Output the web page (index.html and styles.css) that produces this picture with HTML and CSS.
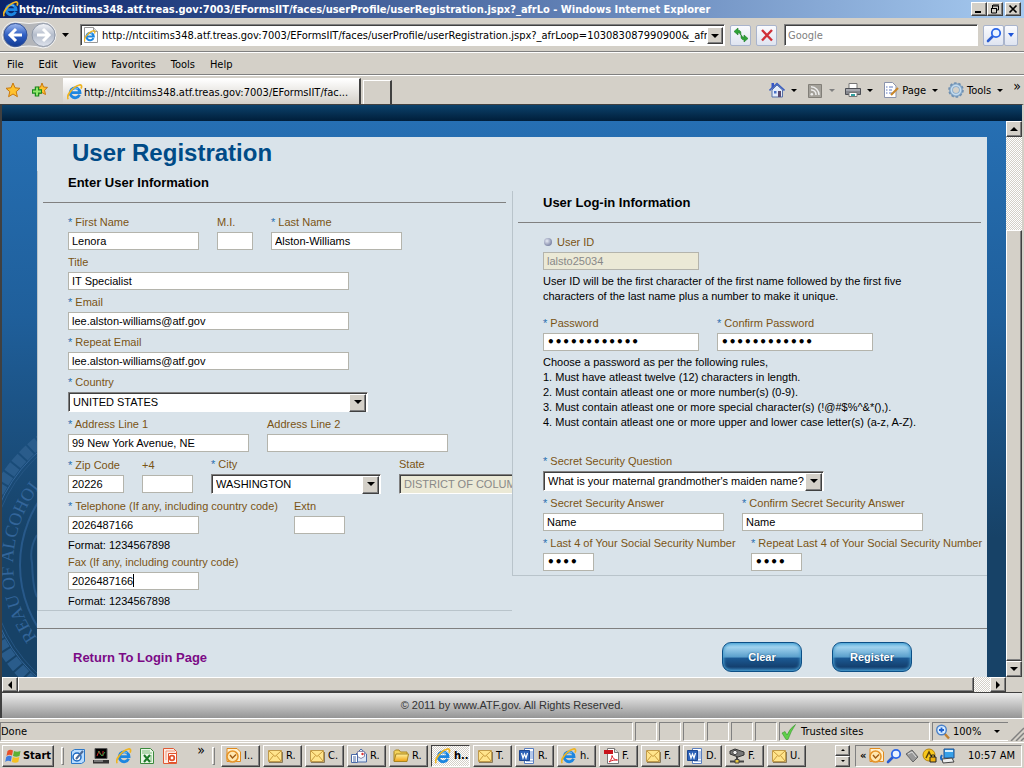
FILE: index.html
```html
<!DOCTYPE html>
<html lang="en">
  <head>
    <title>User Registration</title>
    <meta charset="UTF-8" />
    <meta name="viewport" content="width=device-width" />
    <link rel="stylesheet" href="styles.css">
  </head>
  <body>
    <!-- Shared icons -->
    <svg class="sprite" aria-hidden="true">
      <defs>
        <linearGradient id="blue-ball" x1="0" y1="0" x2="0" y2="1">
          <stop offset="0" stop-color="#9fb9ee" />
          <stop offset=".5" stop-color="#2f5fc4" />
          <stop offset="1" stop-color="#123a92" />
        </linearGradient>
        <linearGradient id="grey-ball" x1="0" y1="0" x2="0" y2="1">
          <stop offset="0" stop-color="#f4f6fa" />
          <stop offset=".5" stop-color="#b4bccb" />
          <stop offset="1" stop-color="#dfe4ee" />
        </linearGradient>
        <linearGradient id="gold" x1="0" y1="0" x2="0" y2="1">
          <stop offset="0" stop-color="#fff3a0" />
          <stop offset="1" stop-color="#f0a010" />
        </linearGradient>
        <symbol id="ie" viewBox="0 0 16 16">
          <path d="M12.6 10.8A4.9 4.9 0 1 1 13 8.6H4.6" fill="none" stroke="#1d86e0" stroke-width="2.8" />
          <path d="M4.2 6.4A4.6 4.6 0 0 1 11 5" fill="none" stroke="#7cc4f8" stroke-width="1" />
          <path d="M1.4 15C-1.6 12.6 5.6 3 11.6 1.2c3-1 3.6.8 2.4 3.4" fill="none" stroke="#eeb422" stroke-width="1.7" />
        </symbol>
        <symbol id="mail" viewBox="0 0 16 16">
          <path d="M1.5 2.500h13v11h-13z" fill="#ffe48c" stroke="#c09a4a" />
          <path d="M2 3l6 5.500L14 3M2 13l4.500-5.500M14 13L9.500 7.500" fill="none" stroke="#c89a3c" />
          <path d="M2 14.500h13.500V4" fill="none" stroke="#8a7a5a" />
        </symbol>
        <symbol id="clock" viewBox="0 0 16 16">
          <path d="M2 .5h10l3.500 3.500v9.500H2z" fill="#fff1d0" stroke="#e08a1e" />
          <circle cx="7.500" cy="8.500" r="5.500" fill="#ffe7b0" stroke="#e6952a" stroke-width="1.600" />
          <path d="M5 7l2.500 3L11 6.500" fill="none" stroke="#a05a10" stroke-width="1.400" />
        </symbol>
        <symbol id="folder" viewBox="0 0 16 16">
          <path d="M1 13V3.500L2.500 2H6l1.500 2H14v2" fill="#f3d35c" stroke="#a88420" />
          <path d="M1 13.500L3 6h12.500L14 13.500z" fill="url(#gold)" stroke="#a88420" />
        </symbol>
        <symbol id="word" viewBox="0 0 16 16">
          <path d="M5.500.5h9v15h-9z" fill="#fff" stroke="#5b7fc0" />
          <path d="M11 4h3M11 6h3M11 8h3M11 10h3M7 13h7" stroke="#6d92d4" />
          <path d="M.5 2.500h10v10H.5z" fill="#2d62b8" stroke="#1d4690" />
          <path d="M2.500 5l1.500 5 1.500-4L7 10l1.500-5" fill="none" stroke="#fff" stroke-width="1.200" />
        </symbol>
        <symbol id="pdf" viewBox="0 0 16 16">
          <path d="M4.500.5h7l4 4v11h-11z" fill="#fff" stroke="#777" />
          <path d="M11.500.5v4h4" fill="#ddd" stroke="#777" />
          <path d="M1 2h9v4H1z" fill="#c8141c" />
          <path d="M6 14c2-2 3-4 3-6.500 1 3 2.500 4.500 5.500 4.500-3 0-5.500 0-8.500 2z" fill="none" stroke="#d8202a" />
        </symbol>
        <symbol id="open-mail" viewBox="0 0 16 16">
          <path d="M5 6l5-5 5.500 5v8H5z" fill="#dce8f8" stroke="#4a6aa8" />
          <path d="M6.500 3.500h7v5l-3.500 2-3.500-2z" fill="#fff" stroke="#88a" />
          <circle cx="11.500" cy="6" r="1.200" fill="#d33" />
          <path d="M.5 6.500h6v8h-6z" fill="#fff" stroke="#4a6aa8" />
          <path d="M2 9h3M2 11h3M2 13h3" stroke="#4a6aa8" />
        </symbol>
        <symbol id="network" viewBox="0 0 16 16">
          <path d="M1 3l5-2 9 3v3L9 9 1 6z" fill="#777" stroke="#333" />
          <circle cx="6" cy="4.500" r="2.200" fill="#eee" stroke="#444" />
          <path d="M8 9v4M1 13.500h14" stroke="#444" stroke-width="2" />
          <path d="M6 11.500h4v3.500H6z" fill="#e8c840" stroke="#444" />
        </symbol>
        <symbol id="lens" viewBox="0 0 16 16">
          <path d="M7 9L2 14" stroke="#2a5cd0" stroke-width="2.600" stroke-linecap="round" />
          <circle cx="10" cy="6" r="4.200" fill="#eaf4ff" stroke="#2a66e8" stroke-width="1.800" />
        </symbol>
      </defs>
    </svg>

    <!-- Title bar -->
    <header class="title-bar">
      <svg class="icon"><use href="#ie" /></svg>
      <span class="title-text">http://ntciitims348.atf.treas.gov:7003/EFormsIIT/faces/userProfile/userRegistration.jspx?_afrLo - Windows Internet Explorer</span>
      <button class="win-btn" aria-label="Minimize"><svg viewBox="0 0 12 10"><path d="M2 8h6" stroke="#000" stroke-width="2" /></svg></button>
      <button class="win-btn" aria-label="Restore"><svg viewBox="0 0 12 10"><path d="M4 1h6M4 2h5.500v4H8M3.500 1v3M2 4.500h6M2.500 4v5h5V4" fill="none" stroke="#000" /></svg></button>
      <button class="win-btn close" aria-label="Close"><svg viewBox="0 0 12 10"><path d="M2.500 1.500l7 7M9.500 1.500l-7 7" stroke="#000" stroke-width="1.700" /></svg></button>
    </header>

    <!-- Address bar -->
    <div class="nav-bar">
      <button class="plain" aria-label="Back and forward">
        <svg width="70" height="28" viewBox="0 0 70 28">
          <path d="M14 1q14 3 28 0a13 13 0 0 1 0 26q-14-4-28 0A13 13 0 0 1 14 1z" fill="#b4b6ba" stroke="#f4f4f4" />
          <circle cx="14.500" cy="14" r="11.500" fill="url(#blue-ball)" stroke="#31529a" />
          <circle cx="42.500" cy="14" r="11.500" fill="url(#grey-ball)" stroke="#8f98a8" />
          <path d="M9 14h12M15 8l-6 6 6 6" fill="none" stroke="#fff" stroke-width="3" />
          <path d="M36 14h12M42 8l6 6-6 6" fill="none" stroke="#fff" stroke-width="3" />
          <path d="M61 12h7l-3.500 4z" />
        </svg>
      </button>
      <div class="address">
        <svg class="icon" viewBox="0 0 16 16"><path d="M1.500.5h9l4 4v11h-13z" fill="#fff" stroke="#999" /><path d="M10.500.5v4h4" fill="#ddd" stroke="#999" /><use href="#ie" x="1" y="3" width="12" height="12" /></svg>
        <input type="text" aria-label="Address" value="http://ntciitims348.atf.treas.gov:7003/EFormsIIT/faces/userProfile/userRegistration.jspx?_afrLoop=103083087990900&amp;_afrWindowMode=0">
        <button class="drop" aria-label="Show addresses"></button>
      </div>
      <button class="tool-btn" aria-label="Refresh"><svg class="icon" viewBox="0 0 16 16"><path d="M5 1L1 4.500 5 8V5.800c1.500 0 2.300.8 2.500 2.400C8.600 5 7.500 3.200 5 3.200zM11 8l4 3.500-4 3.500v-2.200c-2.500 0-3.700-1.800-2.600-5 .3 1.600 1.100 2.400 2.600 2.400z" fill="#2fa336" stroke="#1c7a26" stroke-width=".6" /></svg></button>
      <button class="tool-btn" aria-label="Stop"><svg class="icon" viewBox="0 0 16 16"><path d="M3 3l10 10.500M13 3L3 13.500" stroke="#d03038" stroke-width="2.400" /></svg></button>
      <input class="search" type="text" aria-label="Search" placeholder="Google">
      <div class="search-go">
        <button class="tool-btn" aria-label="Search"><svg class="icon"><use href="#lens" /></svg></button>
        <button class="tool-btn narrow" aria-label="Search options"><svg width="6" height="4"><path d="M0 0h6L3 4z" fill="#1f55d8" /></svg></button>
      </div>
    </div>

    <!-- Menus -->
    <nav class="menu-bar">
      <button class="plain">File</button>
      <button class="plain">Edit</button>
      <button class="plain">View</button>
      <button class="plain">Favorites</button>
      <button class="plain">Tools</button>
      <button class="plain">Help</button>
    </nav>

    <!-- Tabs and page tools -->
    <div class="tab-bar">
      <div class="favorites">
        <svg class="icon" viewBox="0 0 16 16"><path d="M8 1l2 4.800 5 .5-3.800 3.400 1.200 5L8 12l-4.400 2.700 1.200-5L1 6.300l5-.5z" fill="#ffc22e" stroke="#c8780e" /></svg>
        <svg class="icon" viewBox="0 0 16 16"><path d="M10 1l1.500 4 4 .4-3 2.800 1 4.300-3.500-2-4 2 1-4.300-3-2.800 4.500-.4z" fill="#ffc22e" stroke="#c8780e" /><path d="M5 4.500v10M0 9.500h10" stroke="#1a8a1e" stroke-width="4.500" /><path d="M5 5.500v8M1 9.500h8" stroke="#8fe86a" stroke-width="2" /></svg>
      </div>
      <button class="tab"><svg class="icon"><use href="#ie" /></svg>http://ntciitims348.atf.treas.gov:7003/EFormsIIT/fac...</button>
      <button class="tab new" aria-label="New tab"></button>
      <div class="page-tools">
        <button class="plain arrow" aria-label="Home"><svg class="icon" viewBox="0 0 16 16"><path d="M3 8v7h10.500V8L8 3z" fill="#e4ecfa" stroke="#5570a8" /><path d="M2.500 1h2.500v4l-2.500 2z" fill="#3656c8" /><path d="M.5 8.500L8 1.500l7.500 7" fill="none" stroke="#3c5fc0" stroke-width="1.600" /><path d="M9 9h3v6H9z" fill="#5b4a70" /><path d="M5 9h2.500v2.500H5z" fill="#4a72c8" /></svg></button>
        <button class="plain arrow dim" aria-label="Feeds"><svg class="icon" viewBox="0 0 16 16"><path d="M1.500 2.500h13v13h-13z" fill="#a4a19a" stroke="#827f78" /><circle cx="4.800" cy="12.200" r="1.300" fill="#eee" /><path d="M4 8a4.500 4.500 0 0 1 5 5M4 4.800A8 8 0 0 1 12 13" fill="none" stroke="#eee" stroke-width="1.500" /></svg></button>
        <button class="plain arrow" aria-label="Print"><svg class="icon" viewBox="0 0 16 16"><path d="M4 1.500h8v5H4z" fill="#fff" stroke="#777" /><path d="M.5 6.500h15v6H.5z" fill="#85878e" stroke="#4d4f55" /><path d="M1 8h14" stroke="#c6c8ce" /><path d="M4 10.500h8v4H4z" fill="#fff" stroke="#777" /><path d="M6 13h4" stroke="#30a0a0" stroke-width="2" /></svg></button>
        <button class="plain arrow"><svg class="icon" viewBox="0 0 16 16"><path d="M1.500.5h8l3.500 3.500v11.500H1.500z" fill="#fff" stroke="#8a93ac" /><path d="M3 5h1.500M6 5h4M3 8h1.500M6 8h3M3 11h1.500M6 11h3" stroke="#5c78c0" /><path d="M8 13l7-7" stroke="#c8862a" stroke-width="2.200" /></svg>Page</button>
        <button class="plain arrow"><svg class="icon" viewBox="0 0 16 16"><circle cx="8" cy="8" r="5" fill="none" stroke="#86a8c8" stroke-width="4" /><circle cx="8" cy="8" r="7" fill="none" stroke="#6f8fb0" stroke-width="1.600" stroke-dasharray="2.500 1.900" /><circle cx="8" cy="8" r="4.600" fill="none" stroke="#c4dbee" stroke-width="1.600" /></svg>Tools</button>
        <button class="plain more" aria-label="More tools">»</button>
      </div>
    </div>

    <div class="viewport">
      <div class="banner"></div>
      <div class="scroll-area">
        <main class="page">
          <svg class="seal" viewBox="2 427 35 250" aria-hidden="true">
            <circle cx="138" cy="565" r="158" fill="none" stroke="#2a5c8b" stroke-width="12" stroke-dasharray="9 2" />
            <circle cx="138" cy="565" r="151" fill="none" stroke="#33669a" />
            <circle cx="138" cy="565" r="148" fill="none" stroke="#265684" />
            <circle cx="138" cy="565" r="118" fill="none" stroke="#28598a" stroke-width="2" />
            <path d="M37 535q-8 14-5 28 1 26 5 34" fill="none" stroke="#265684" stroke-width="2" />
            <path id="ring" d="M50 653A125 125 0 0 1 60 467" fill="none" />
            <text class="seal-text"><textPath href="#ring" startOffset="20">REAU OF ALCOHOL</textPath></text>
          </svg>

          <form class="panel">
            <h1>User Registration</h1>
            <div class="columns">
              <section class="user-info">
                <h2>Enter User Information</h2>
                <div class="fields">
                  <div class="row">
                    <div class="field"><label for="first"><i>*</i> First Name</label><input id="first" class="w-name" type="text" value="Lenora"></div>
                    <div class="field"><label for="mi">M.I.</label><input id="mi" class="w-mi" type="text"></div>
                    <div class="field"><label for="last"><i>*</i> Last Name</label><input id="last" class="w-name" type="text" value="Alston-Williams"></div>
                  </div>
                  <div class="row">
                    <div class="field"><label for="title">Title</label><input id="title" class="w-long" type="text" value="IT Specialist"></div>
                  </div>
                  <div class="row">
                    <div class="field"><label for="email"><i>*</i> Email</label><input id="email" class="w-long" type="text" value="lee.alston-williams@atf.gov"></div>
                  </div>
                  <div class="row">
                    <div class="field"><label for="email2"><i>*</i> Repeat Email</label><input id="email2" class="w-long" type="text" value="lee.alston-williams@atf.gov"></div>
                  </div>
                  <div class="row">
                    <div class="field"><label for="country"><i>*</i> Country</label><span class="select w-country"><select id="country"><option>UNITED STATES</option></select></span></div>
                  </div>
                  <div class="row">
                    <div class="field"><label for="addr1"><i>*</i> Address Line 1</label><input id="addr1" class="w-address" type="text" value="99 New York Avenue, NE"></div>
                    <div class="field"><label for="addr2">Address Line 2</label><input id="addr2" class="w-address" type="text"></div>
                  </div>
                  <div class="row">
                    <div class="field"><label for="zip"><i>*</i> Zip Code</label><input id="zip" class="w-zip" type="text" value="20226"></div>
                    <div class="field"><label for="plus4">+4</label><input id="plus4" class="w-short" type="text"></div>
                    <div class="field"><label for="city"><i>*</i> City</label><span class="select w-city"><select id="city"><option>WASHINGTON</option></select></span></div>
                    <div class="field"><label for="state">State</label><span class="select w-city"><select id="state" disabled><option>DISTRICT OF COLUMBIA</option></select></span></div>
                  </div>
                  <div class="row phone">
                    <div class="field w-phone"><label for="tel"><i>*</i> Telephone (If any, including country code)</label><input id="tel" class="w-name" type="text" value="2026487166"></div>
                    <div class="field"><label for="extn">Extn</label><input id="extn" class="w-short" type="text"></div>
                  </div>
                  <p class="format">Format: 1234567898</p>
                  <div class="row phone">
                    <div class="field"><label for="fax">Fax (If any, including country code)</label><span class="focused"><input id="fax" class="w-name" type="text" value="2026487166"></span></div>
                  </div>
                  <p class="format">Format: 1234567898</p>
                </div>
              </section>

              <section class="login-info">
                <h2>User Log-in Information</h2>
                <div class="fields">
                  <div class="row">
                    <div class="field"><label for="userid"><span class="bullet"></span>User ID</label><input id="userid" class="w-login" type="text" value="lalsto25034" disabled></div>
                  </div>
                  <p class="note">User ID will be the first character of the first name followed by the first five<br>characters of the last name plus a number to make it unique.</p>
                  <div class="row passwords">
                    <div class="field"><label for="pw"><i>*</i> Password</label><input id="pw" class="w-login" type="password" value="abcdefghijkl"></div>
                    <div class="field"><label for="pw2"><i>*</i> Confirm Password</label><input id="pw2" class="w-login" type="password" value="abcdefghijkl"></div>
                  </div>
                  <p class="note">Choose a password as per the following rules,<br>1. Must have atleast twelve (12) characters in length.<br>2. Must contain atleast one or more number(s) (0-9).<br>3. Must contain atleast one or more special character(s) (!@#$%^&amp;*(),).<br>4. Must contain atleast one or more upper and lower case letter(s) (a-z, A-Z).</p>
                  <div class="row question">
                    <div class="field"><label for="question"><i>*</i> Secret Security Question</label><span class="select w-long"><select id="question"><option>What is your maternal grandmother's maiden name?</option></select></span></div>
                  </div>
                  <div class="row">
                    <div class="field"><label for="answer"><i>*</i> Secret Security Answer</label><input id="answer" class="w-address" type="text" value="Name"></div>
                    <div class="field"><label for="answer2"><i>*</i> Confirm Secret Security Answer</label><input id="answer2" class="w-address" type="text" value="Name"></div>
                  </div>
                  <div class="row">
                    <div class="field w-ssn"><label for="ssn"><i>*</i> Last 4 of Your Social Security Number</label><input id="ssn" class="w-short" type="password" value="1234"></div>
                    <div class="field"><label for="ssn2"><i>*</i> Repeat Last 4 of Your Social Security Number</label><input id="ssn2" class="w-short" type="password" value="1234"></div>
                  </div>
                </div>
              </section>
            </div>

            <div class="actions">
              <a href="#">Return To Login Page</a>
              <button class="action-btn" type="reset">Clear</button>
              <button class="action-btn" type="submit">Register</button>
            </div>
          </form>
        </main>
        <div class="scrollbar vertical">
          <span class="scroll-btn up"></span>
          <span class="track"></span>
          <span class="thumb"></span>
          <span class="scroll-btn down"></span>
        </div>
      </div>
      <div class="scrollbar horizontal">
        <span class="scroll-btn left"></span>
        <span class="thumb"></span>
        <span class="track"></span>
        <span class="scroll-btn right"></span>
      </div>
      <footer class="copyright">© 2011 by www.ATF.gov. All Rights Reserved.</footer>
    </div>

    <!-- Status bar -->
    <div class="status-bar">
      <span class="pane message">Done</span>
      <span class="pane small"></span>
      <span class="pane small"></span>
      <span class="pane small"></span>
      <span class="pane small"></span>
      <span class="pane small"></span>
      <span class="pane small"></span>
      <span class="pane zone"><svg class="icon" viewBox="0 0 16 16"><path d="M1 9l3-1.500 2 3.500Q9 4 14.500.5 10 7 7 15.500H5z" fill="#5fd04a" stroke="#2a8a22" stroke-width=".5" /></svg>Trusted sites</span>
      <span class="pane zoom"><svg class="icon" viewBox="0 0 16 16"><path d="M9 9l5 5.500" stroke="#c08030" stroke-width="2.400" /><circle cx="6.500" cy="6" r="4.800" fill="#d8ecff" stroke="#4a80c8" stroke-width="1.400" /><path d="M6.500 3.500v5M4 6h5" stroke="#1d62d0" stroke-width="1.800" /></svg>100%<svg class="tick" width="6" height="3"><path d="M0 0h6L3 3z" /></svg></span>
      <svg class="grip" width="14" height="14"><path d="M1 14L14 1M6 14l8-8M11 14l3-3" stroke="#808080" stroke-width="1.500" /></svg>
    </div>

    <!-- Taskbar -->
    <div class="taskbar">
      <button class="start"><svg width="17" height="16" viewBox="0 0 17 16"><path d="M2.500 3Q5 1 8 2.500L7 7.500Q4 6 1.500 8z" fill="#e8502a" /><path d="M9 3q3 1.500 6.500 0l-1 5Q11 9.500 8 8z" fill="#5cb034" /><path d="M1.200 9Q4 7 6.800 8.500l-1 5Q3 12 .2 14z" fill="#3f7ce0" /><path d="M7.800 9q3 1.500 6.500 0l-1 5q-3 1.500-6.500 0z" fill="#f5c020" /></svg>Start</button>
      <span class="divider"></span>
      <div class="quick">
        <svg class="icon" viewBox="0 0 16 16"><path d="M1.500 3.500l3-2h10v12l-3 2h-10z" fill="#b8dcff" stroke="#2c78c8" /><circle cx="7" cy="9" r="4" fill="#fff" stroke="#1c68c0" stroke-width="1.500" /><path d="M6 11l7-8" stroke="#4a6a9a" stroke-width="2" /></svg>
        <svg class="icon" viewBox="0 0 16 16"><path d="M2 .5h12v10H2z" fill="#000" stroke="#555" /><path d="M4 8l2-5 2 4M10 3v5" fill="none" stroke="#d02a2a" /><path d="M5 3l4 5 3-4" fill="none" stroke="#2fa04a" /><path d="M0 12h16v3.500H0z" fill="#333" /><path d="M1 13h9" stroke="#bbb" /></svg>
        <svg class="icon"><use href="#ie" /></svg>
        <svg class="icon" viewBox="0 0 16 16"><path d="M1.500.5h10l3 3v12h-13z" fill="#e9f6e6" stroke="#3a8a3c" /><path d="M3 3h8M3 5h10M12 7v7" stroke="#7cba7a" /><path d="M5 7l6 7M11 7l-6 7" stroke="#1d7a28" stroke-width="2" /></svg>
        <svg class="icon" viewBox="0 0 16 16"><path d="M1.500.5h10l3 3v12h-13z" fill="#fdece4" stroke="#e05a34" /><path d="M4 12V3h9" fill="none" stroke="#f0967a" /><path d="M6.500 5.500h8v9h-8z" fill="#fff" stroke="#e2502a" /><circle cx="10" cy="10" r="2.300" fill="none" stroke="#e2502a" stroke-width="1.800" /></svg>
      </div>
      <span class="chevron">»</span>
      <span class="divider"></span>
      <nav class="tasks">
        <button><svg class="icon"><use href="#clock" /></svg>I..</button>
        <button><svg class="icon"><use href="#mail" /></svg>R.</button>
        <button><svg class="icon"><use href="#mail" /></svg>C.</button>
        <button><svg class="icon"><use href="#open-mail" /></svg>R.</button>
        <button><svg class="icon"><use href="#folder" /></svg>R.</button>
        <button class="active"><svg class="icon"><use href="#ie" /></svg>h..</button>
        <button><svg class="icon"><use href="#mail" /></svg>T.</button>
        <button><svg class="icon"><use href="#word" /></svg>R.</button>
        <button><svg class="icon"><use href="#ie" /></svg>h.</button>
        <button><svg class="icon"><use href="#pdf" /></svg>F.</button>
        <button><svg class="icon"><use href="#mail" /></svg>F.</button>
        <button><svg class="icon"><use href="#word" /></svg>D.</button>
        <button><svg class="icon"><use href="#network" /></svg>F.</button>
        <button><svg class="icon"><use href="#mail" /></svg>U.</button>
      </nav>
      <div class="spinner"><button aria-label="Scroll up"><svg width="4" height="2"><path d="M0 2h4L2 0z" /></svg></button><button aria-label="Scroll down"><svg width="4" height="2"><path d="M0 0h4L2 2z" /></svg></button></div>
      <div class="tray">
        <b>«</b>
        <svg class="icon"><use href="#clock" /></svg>
        <svg class="icon"><use href="#lens" /></svg>
        <svg class="icon" viewBox="0 0 16 16"><path d="M2 6l6-4 6 7-5 5z" fill="#999" stroke="#666" /><path d="M4 6l4-2 4 5" fill="none" stroke="#ddd" /></svg>
        <svg class="icon" viewBox="0 0 16 16"><circle cx="7" cy="7" r="6" fill="#f8c81c" stroke="#b8860e" /><path d="M4 10l3-6 2 4" fill="none" stroke="#5a4208" stroke-width="1.500" /><path d="M8 9h6v5H8z" fill="#f0b010" stroke="#222" /><path d="M9.500 9V7h3v2" fill="none" stroke="#222" /></svg>
        <svg class="icon" viewBox="0 0 16 16"><path d="M4 1h10v9H4z" fill="#37a0e8" stroke="#1c4f90" /><path d="M5 3h8" stroke="#d8f0ff" stroke-width="2" /><path d="M2 11l10-1 2 4-11 1z" fill="#eee" stroke="#444" /><path d="M2 7q-2 3 0 5" fill="none" stroke="#1c68c0" stroke-width="2" /></svg>
        <time>10:57 AM</time>
      </div>
    </div>
  </body>
</html>
```
FILE: styles.css
```css
* {
  box-sizing: border-box;
}

body {
  display: flex;
  flex-direction: column;
  min-height: 100vh;
  margin: 0;
  overflow: hidden;
  background-color: #d4d0c8;
  color: #000;
  font-family: "DejaVu Sans Condensed", "DejaVu Sans", sans-serif;
  font-size: 11px;
}

button,
input,
select {
  margin: 0;
  font: inherit;
  color: inherit;
}

button {
  display: flex;
  align-items: center;
  justify-content: center;
  padding: 0;
  border: none;
  background: none;
  white-space: nowrap;
}

input:focus,
select:focus {
  outline: none;
}

.sprite {
  position: absolute;
  width: 0;
  height: 0;
}

.icon {
  flex: none;
  width: 16px;
  height: 16px;
}

/* Title bar */
.title-bar {
  display: flex;
  align-items: center;
  height: 18px;
  padding: 0 3px;
  background: linear-gradient(to right, #0a246a, #a6caf0);
  color: #fff;
  font-weight: bold;
}

.title-text {
  flex: 1;
  overflow: hidden;
  white-space: nowrap;
}

.win-btn {
  width: 16px;
  height: 14px;
  border: 1px solid;
  border-color: #fff #404040 #404040 #fff;
  background-color: #d4d0c8;
  box-shadow: inset -1px -1px #808080;
}

.win-btn svg {
  width: 12px;
  height: 10px;
}

.close {
  margin-left: 2px;
}

/* Address bar */
.nav-bar {
  display: flex;
  align-items: center;
  gap: 5px;
  height: 34px;
  padding: 1px 6px 0 1px;
  border-bottom: 1px solid #808080;
}

.address,
.search {
  height: 22px;
  border: 1px solid;
  border-color: #808080 #fff #fff #808080;
  background-color: #fff;
  box-shadow: inset 1px 1px #404040;
}

.address {
  display: flex;
  flex: 1;
  align-items: center;
  margin-left: 4px;
  padding: 1px 1px 1px 2px;
}

.address input {
  flex: 1;
  min-width: 0;
  padding: 0 0 0 3px;
  border: none;
  background: none;
}

.drop {
  position: relative;
  width: 16px;
  height: 17px;
}

.search {
  width: 194px;
  margin-left: 2px;
  padding: 0 3px;
}

.search::placeholder {
  color: #808080;
}

.tool-btn {
  width: 21px;
  height: 21px;
  border: 1px solid #a9b4cc;
  border-radius: 2px;
  background: linear-gradient(#fafbfe, #dfe4f0);
}

.search-go {
  display: flex;
}

.narrow {
  width: 14px;
}

/* Menus */
.menu-bar {
  display: flex;
  align-items: center;
  gap: 15px;
  height: 23px;
  padding: 1px 0 0 7px;
  border-top: 1px solid #fff;
  border-bottom: 1px solid #808080;
}

/* Tabs */
.tab-bar {
  display: flex;
  align-items: flex-end;
  height: 29px;
  border-top: 1px solid #fff;
}

.favorites {
  display: flex;
  gap: 11px;
  align-self: center;
  width: 63px;
  padding-left: 5px;
}

.tab {
  justify-content: flex-start;
  gap: 1px;
  width: 298px;
  height: 26px;
  padding: 1px 0 0 4px;
  border-right: 2px solid #404040;
  border-top: 1px solid #fff;
  background: linear-gradient(#fff, #d4d0c8);
}

.new {
  width: 29px;
  height: 24px;
  margin-left: 2px;
  border-left: 1px solid #fff;
  background: none;
}

.page-tools {
  display: flex;
  flex: 1;
  align-items: center;
  align-self: center;
  justify-content: flex-end;
  gap: 10px;
  padding-right: 3px;
}

.page-tools button {
  gap: 3px;
}

.arrow::after {
  margin-left: 3px;
  border: 3px solid transparent;
  border-top-color: #000;
  border-bottom: none;
  content: "";
}

.dim::after {
  border-top-color: #808080;
}

.more {
  align-self: flex-start;
  font-size: 14px;
  line-height: 8px;
}

/* Web page viewport */
.viewport {
  display: flex;
  flex: 1;
  flex-direction: column;
  border: solid #404040;
  border-width: 1px 2px 0;
  border-right-color: #d4d0c8;
  font-family: "Liberation Sans", Arial, sans-serif;
}

.banner {
  height: 16px;
  background: linear-gradient(#0c426c, #001e3a);
}

.scroll-area {
  display: flex;
  flex: 1;
}

.page {
  display: flex;
  flex: 1;
  min-width: 0;
  padding-right: 19px;
  background: linear-gradient(#266fb3, #1f5f9b 35%, #174267 75%);
}

.seal {
  flex: none;
  align-self: flex-end;
  width: 35px;
  height: 250px;
}

.seal-text {
  fill: #33659a;
  font-family: "Liberation Serif", serif;
  font-size: 18px;
}

.panel {
  flex: 1;
  min-width: 0;
  margin-top: 16px;
  background-color: #d9e3ea;
}

h1 {
  height: 34px;
  margin: 0;
  padding-left: 35px;
  color: #004b87;
  font-size: 24px;
  line-height: 32px;
}

.columns {
  display: flex;
  align-items: flex-start;
}

.user-info,
.login-info {
  flex: 1;
  min-width: 0;
  overflow: hidden;
  border: solid #b9c4cb;
  border-width: 0 0 1px 1px;
}

.login-info {
  margin-top: 20px;
}

h2 {
  height: 32px;
  margin: 0 6px 9px 5px;
  padding-left: 25px;
  border-bottom: 1px solid #808080;
  font-size: 13px;
  line-height: 23px;
}

/* Form fields */
.fields {
  padding: 0 0 2px 30px;
}

.row {
  display: flex;
  align-items: center;
  gap: 18px;
  margin-bottom: 2px;
}

.phone {
  margin-bottom: 4px;
}

.field {
  flex: none;
}

.field label {
  display: block;
  color: #7a5414;
  line-height: 20px;
  white-space: nowrap;
}

.field i {
  color: #2a6fb0;
  font-style: normal;
}

.field > input,
.focused input {
  display: block;
  height: 18px;
  padding: 0 3px;
  border: 1px solid #b4b4ac;
  background-color: #fff;
}

.field input:disabled {
  background-color: #ebe9d6;
  color: #888;
}

.field input[type="password"] {
  font-family: "DejaVu Sans", sans-serif;
  font-size: 12px;
  font-weight: bold;
}

.focused {
  position: relative;
  display: block;
}

/* Text caret */
.focused::after {
  position: absolute;
  top: 2px;
  left: 65px;
  width: 1px;
  height: 13px;
  background-color: #000;
  content: "";
}

.select {
  position: relative;
  display: block;
  height: 20px;
}

.select select {
  width: 100%;
  height: 20px;
  padding: 0 18px 0 4px;
  appearance: none;
  border: 1px solid;
  border-color: #808080 #fff #fff #808080;
  border-radius: 0;
  background-color: #fff;
  box-shadow: inset 1px 1px #404040;
}

.select select:disabled {
  background-color: #ebe9d6;
  color: #888;
  opacity: 1;
}

.select::after,
.drop {
  border: 1px solid;
  border-color: #fff #404040 #404040 #fff;
  background: #d4d0c8;
  box-shadow: inset -1px -1px #808080;
}

.select::after {
  position: absolute;
  top: 2px;
  right: 2px;
  width: 15px;
  height: 16px;
  content: "";
}

.select::before,
.drop::before {
  position: absolute;
  top: 8px;
  right: 6px;
  z-index: 1;
  border: 4px solid transparent;
  border-top-color: #000;
  border-bottom: none;
  content: "";
}

.drop::before {
  top: 6px;
  right: 3px;
}

.w-name {
  width: 131px;
}

.w-mi {
  width: 36px;
}

.w-long {
  width: 281px;
}

.w-country {
  width: 300px;
}

.w-address {
  width: 181px;
}

.w-zip {
  width: 56px;
}

.w-short {
  width: 51px;
}

.w-city {
  width: 170px;
}

.w-phone {
  width: 208px;
}

.w-login {
  width: 156px;
}

.w-ssn {
  width: 190px;
}

.format {
  height: 14px;
  margin: 0;
  line-height: 14px;
}

.note {
  margin: 0;
  padding-top: 2px;
  line-height: 15px;
  white-space: nowrap;
}

.passwords {
  margin-top: 9px;
}

.question {
  margin-top: 21px;
}

.bullet {
  display: inline-block;
  width: 8px;
  height: 8px;
  margin: 0 5px 0 1px;
  border-radius: 50%;
  background: radial-gradient(circle at 3px 3px, #e6eaf4, #8088a8 70%);
}

/* Bottom row of the form */
.actions {
  display: flex;
  align-items: center;
  gap: 30px;
  height: 49px;
  margin-top: 17px;
  padding: 8px 75px 0 36px;
  border-top: 1px solid #808080;
}

.actions a {
  flex: 1;
  color: #7b0a86;
  font-size: 13px;
  font-weight: bold;
  text-decoration: none;
}

.action-btn {
  width: 80px;
  height: 30px;
  border: 1px solid #0c4f86;
  border-radius: 9px;
  background: linear-gradient(#7cc4ea, #a0d2ee 15%, #5a9fcc 50%, #1c5a94 54%, #14406f 85%, #2a6ca4);
  box-shadow: inset 0 0 3px 1px #4a9fd0;
  color: #fff;
  font-weight: bold;
  text-shadow: 0 0 2px #10406c;
}

/* Scroll bars */
.scrollbar {
  display: flex;
}

.vertical {
  flex-direction: column;
  width: 16px;
}

.horizontal {
  height: 16px;
  padding-right: 16px;
  border-bottom: 1px solid #404040;
}

.track {
  background: repeating-conic-gradient(#fff 0 25%, #d4d0c8 0 50%) 0 0 / 2px 2px;
}

.vertical .track {
  flex: 93;
}

.vertical .thumb {
  flex: 431;
}

.horizontal .track {
  flex: 16;
}

.horizontal .thumb {
  flex: 956;
}

.thumb,
.scroll-btn {
  border: 1px solid;
  border-color: #fff #404040 #404040 #fff;
  background-color: #d4d0c8;
  box-shadow: inset -1px -1px #808080;
}

.scroll-btn {
  display: grid;
  flex: none;
  width: 16px;
  height: 16px;
  place-items: center;
}

.horizontal .scroll-btn {
  height: 15px;
}

.scroll-btn::before {
  border: 4px solid transparent;
  content: "";
}

.up::before {
  border-top: none;
  border-bottom-color: #000;
}

.down::before {
  border-top-color: #000;
  border-bottom: none;
}

.left::before {
  border-right-color: #000;
  border-left: none;
}

.right::before {
  border-right: none;
  border-left-color: #000;
}

.copyright {
  height: 25px;
  background: linear-gradient(#ececec, #959595);
  color: #333;
  line-height: 25px;
  text-align: center;
}

/* Status bar */
.status-bar {
  display: flex;
  align-items: flex-end;
  gap: 2px;
  height: 24px;
  padding-bottom: 1px;
  border-top: 1px solid #fff;
}

.pane {
  display: flex;
  align-items: center;
  gap: 4px;
  height: 19px;
  border: 1px solid;
  border-color: #808080 #fff #fff #808080;
}

.message {
  flex: 1;
}

.small {
  width: 22px;
}

.zone {
  width: 151px;
  padding-left: 1px;
}

.zoom {
  width: 76px;
  padding-left: 2px;
  gap: 2px;
  border-right: none;
}

.tick {
  margin-left: 11px;
}

/* Taskbar */
.taskbar {
  display: flex;
  align-items: center;
  height: 27px;
  padding: 0 2px 1px;
  border-top: 1px solid #fff;
}

.start,
.tasks button,
.spinner button {
  border: 1px solid;
  border-color: #fff #404040 #404040 #fff;
  background-color: #d4d0c8;
  box-shadow: inset -1px -1px #808080;
}

.start {
  gap: 1px;
  width: 52px;
  height: 22px;
  font-weight: bold;
}

.divider {
  width: 3px;
  height: 18px;
  margin: 0 6px 0 7px;
  border: 1px solid;
  border-color: #fff #808080 #808080 #fff;
}

.quick {
  display: flex;
  gap: 7px;
}

.chevron {
  flex: 1;
  align-self: flex-start;
  font-size: 14px;
  line-height: 14px;
  text-align: right;
}

.tasks {
  display: flex;
  gap: 3px;
}

.tasks button {
  justify-content: flex-start;
  gap: 3px;
  width: 39px;
  height: 22px;
  padding-left: 3px;
  overflow: hidden;
}

.tasks .active {
  border-color: #404040 #fff #fff #404040;
  background: repeating-conic-gradient(#fff 0 25%, #d4d0c8 0 50%) 0 0 / 2px 2px;
  box-shadow: none;
  font-weight: bold;
}

.spinner {
  margin: 0 5px 0 29px;
}

.spinner button {
  width: 15px;
  height: 11px;
}

.tray {
  display: flex;
  align-items: center;
  gap: 2px;
  width: 167px;
  height: 22px;
  padding: 0 6px 0 4px;
  border: 1px solid;
  border-color: #808080 #fff #fff #808080;
}

.tray time {
  flex: 1;
  text-align: right;
  white-space: nowrap;
}
```
